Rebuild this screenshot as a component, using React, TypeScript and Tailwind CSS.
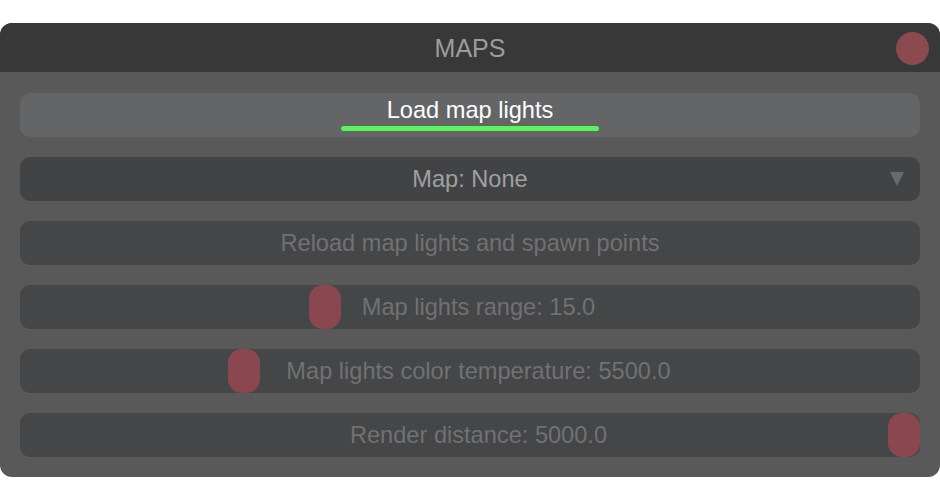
const rows = [
  { label: "Reload map lights and spawn points", thumb: null as number | null },
  { label: "Map lights range: 15.0", thumb: 289 },
  { label: "Map lights color temperature: 5500.0", thumb: 208 },
  { label: "Render distance: 5000.0", thumb: 868 },
]

export default function App() {
  return (
    <div className="w-[940px] h-[500px] bg-white pt-[23px] font-['Liberation_Sans',Arial,sans-serif]">
      <div className="w-[940px] h-[454px] rounded-[12px] overflow-hidden bg-[#595959] flex flex-col">
        {/* title bar */}
        <div className="relative h-[49px] bg-[#383838] flex items-center justify-center">
          <span className="text-[25px] text-[#9c9c9c] mt-[2px]">MAPS</span>
          <div className="absolute right-[11px] top-[9px] w-[33px] h-[33px] rounded-full bg-[#8b4950]" />
        </div>

        <div className="flex flex-col gap-[20px] px-[20px] pt-[21px]">
          {/* main button */}
          <div className="relative h-[44px] rounded-[10px] bg-[#646566] flex items-center justify-center">
            <span className="text-[23.6px] text-white -mt-[8px]">Load map lights</span>
            <div className="absolute left-[321px] top-[33px] w-[258px] h-[5px] rounded-full bg-[#5af55a]" />
          </div>

          {/* dropdown */}
          <div className="relative h-[44px] rounded-[10px] bg-[#424345] flex items-center justify-center">
            <span className="text-[23.6px] text-[#a0a0a0] mt-[2px]">Map: None</span>
            <svg className="absolute right-[16px] top-[15px]" width="14" height="14" viewBox="0 0 14 14">
              <path d="M0 0 L14 0 L7 14 Z" fill="#6a6a6a" />
            </svg>
          </div>

          {rows.map((r) => (
            <div
              key={r.label}
              className={
                r.thumb !== null
                  ? "relative h-[44px] rounded-[10px] bg-[#454648] flex items-center justify-center pl-[17px]"
                  : "relative h-[44px] rounded-[10px] bg-[#454648] flex items-center justify-center"
              }
            >
              {r.thumb !== null && (
                <div
                  className="absolute top-0 w-[32px] h-[44px] rounded-[14px] bg-[#8a4750]"
                  style={{ left: r.thumb }}
                />
              )}
              <span className="relative text-[23.6px] text-[#717171] mt-[2px]">{r.label}</span>
            </div>
          ))}
        </div>
      </div>
    </div>
  )
}
